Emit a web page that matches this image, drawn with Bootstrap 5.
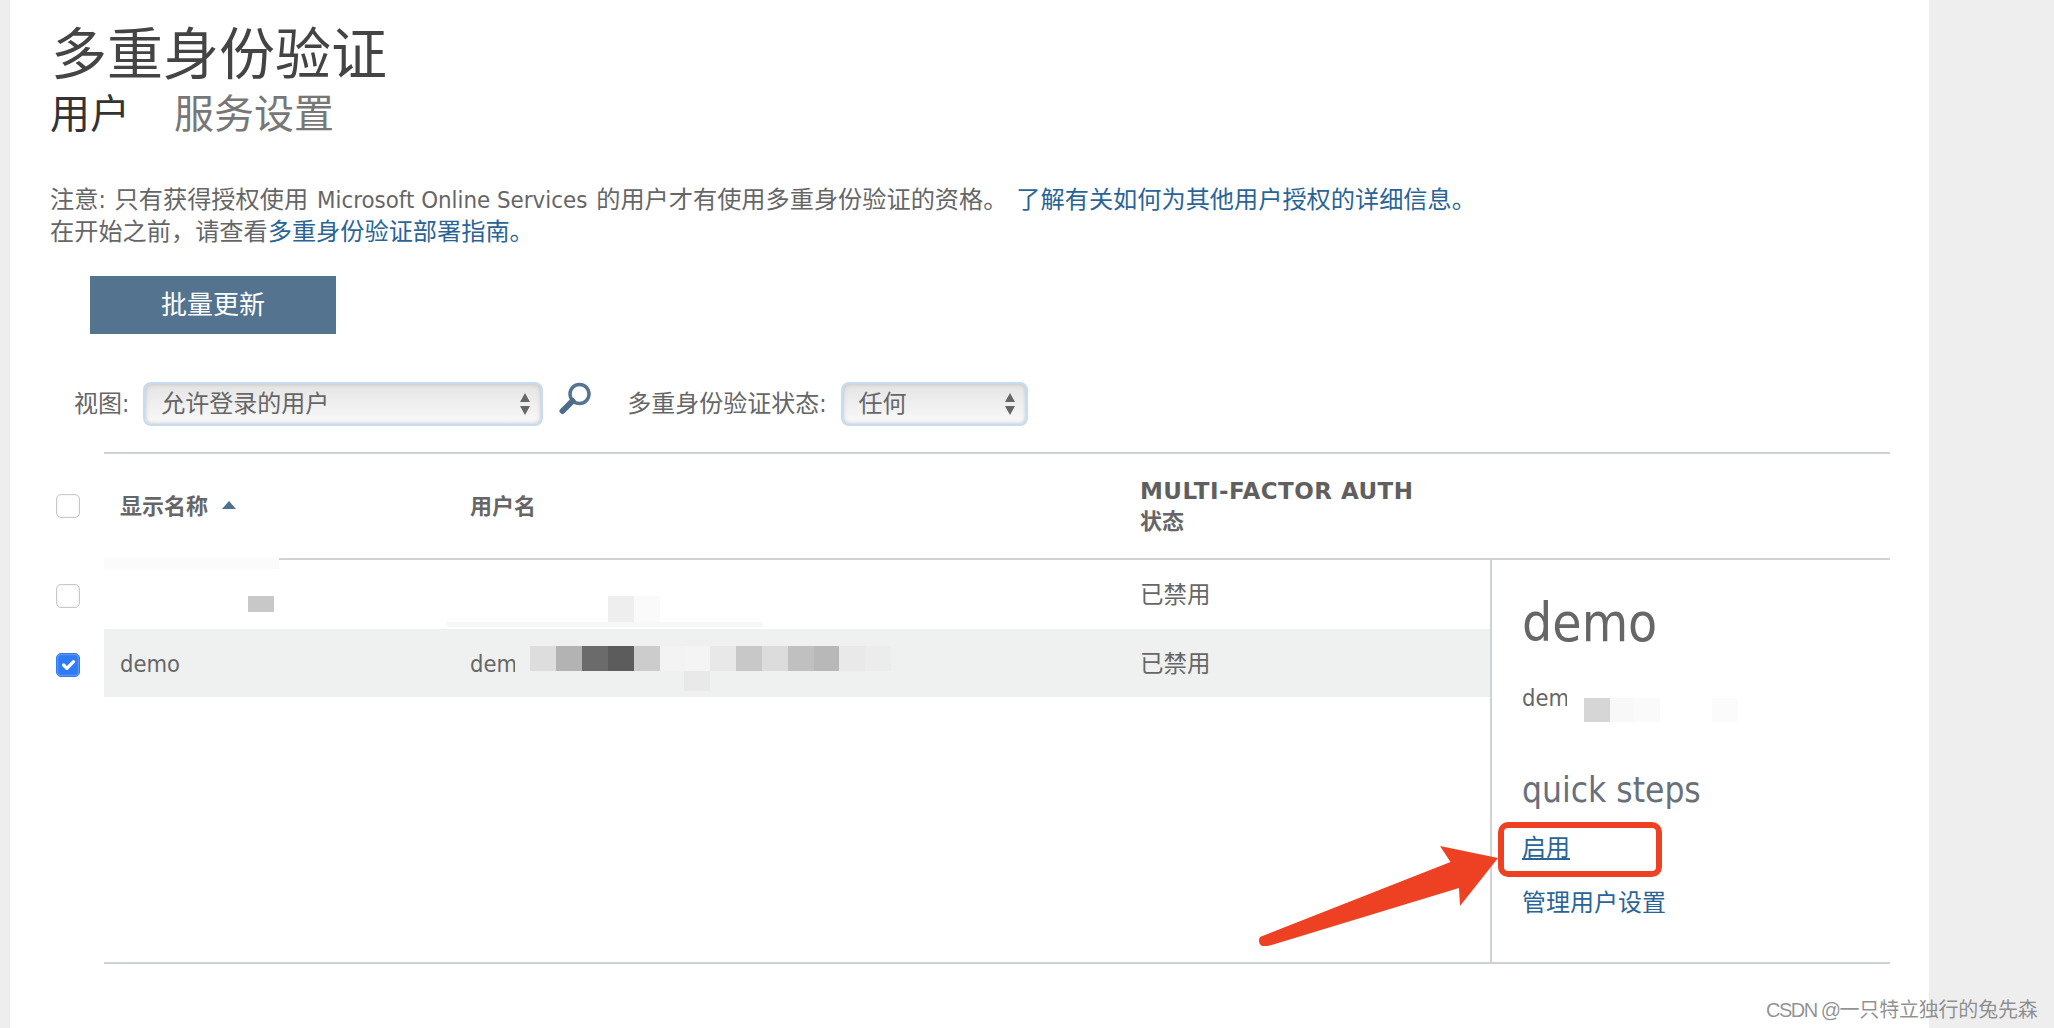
<!DOCTYPE html>
<html lang="zh">
<head>
<meta charset="utf-8">
<title>多重身份验证</title>
<link href="https://cdn.jsdelivr.net/npm/bootstrap@5.3.0/dist/css/bootstrap.min.css" rel="stylesheet">
<style>
html,body{height:100%}
body{background:#eee;font-family:"DejaVu Sans","Noto Sans CJK SC",sans-serif;font-stretch:condensed;color:#666;overflow:hidden}
.sheet{position:relative;margin-left:10px;width:1919px;height:1028px;background:#fff;padding:0 0 0 40px}
.pg-title{font-size:56px;line-height:60px;color:#444;font-weight:400;margin:0;padding:25px 0 0 1px}
.tabs-row{gap:44px;margin-top:6px;font-size:40px;line-height:46px}
.tabs-row a{color:#777;text-decoration:none}
.tabs-row a.on{color:#333}
.notice{font-size:24.200px;line-height:32px;margin:47px 0 0;word-spacing:2px}
.notice span.en{font-size:23.800px;word-spacing:0}
.blue,.blue:hover{color:#2a6496;text-decoration:none}
.bulk{display:block;width:246px;height:58px;margin:28px 0 0 40px;border:0;border-radius:0;background:#53738e;color:#fff;font-size:26px;padding:0}
.filter{margin:40px 0 0 24px;height:60px;font-size:24px}
.filter label{white-space:nowrap}
.pick{height:44px;font-size:24px;color:#666;padding:0 0 0 16px;border:2px solid #c6dcf0;border-radius:8px;line-height:38px;
 background:url("data:image/svg+xml,%3Csvg xmlns='http://www.w3.org/2000/svg' width='12' height='24'%3E%3Cpath d='M6 1l5 9H1zM6 23l5-9H1z' fill='%23666'/%3E%3C/svg%3E") no-repeat right 10px center,linear-gradient(#e4e4e4,#fafafa);box-shadow:inset 0 0 4px #bbb}
.pick.v1{width:400px;margin-left:14px}
.pick.v2{width:187px;margin-left:14px}
.lens{margin:-12px 0 0 16px;width:33px;height:33px;flex:none}
.lbl2{margin-left:35px}
.grid-wrap{position:relative;margin:18px 0 0 54px;width:1786px;border-top:2px solid #ced2d5;border-bottom:2px solid #ced2d5}
.hdr{height:106px;border-bottom:2px solid #ced2d5;font-weight:700;font-size:22px}
.c1{width:366px;padding-left:16px;flex:none}
.c2{width:670px;flex:none}
.c3{flex:none}
.sort-up{display:inline-block;border:7px solid transparent;border-top:0;border-bottom:8px solid #4b7390;margin-left:14px;vertical-align:5px}
.mfa{font-size:23px;line-height:32px;letter-spacing:.02em;color:#5f5f5f;font-stretch:normal}
.sub{font-size:22px;line-height:30px}
.lower{height:402px}
.rows{width:1386px;flex:none}
.urow{height:69px;font-size:23.500px;padding-top:2px}
.urow.sel{height:68px;background:#eff1f1;padding-top:3px}
.side{border-left:2px solid #ced2d5;padding:33px 0 0 30px;flex:1 1 auto}
.side h2{font-size:53px;line-height:60px;font-weight:400;color:#666;margin:0}
.side .mail{font-size:23.500px;line-height:30px;margin:30px 0 0}
.side h3{font-size:35px;line-height:48px;font-weight:400;color:#68707a;margin:53px 0 0}
.side a{display:block;font-size:24px;line-height:32px}
.side a.go{margin-top:18px;text-decoration:underline}
.side a.mg{margin-top:23px}
.form-check-input.cb{position:absolute;left:-48px;width:24px;height:24px;margin:0;border-radius:5px;border:1px solid #c9c9c9;box-shadow:inset 0 0 2px #ddd}
.form-check-input.cb:checked{background-color:#2f7bf6;border-color:#2f7bf6}
.blk{position:absolute}
.redbox{position:absolute;left:1488px;top:822px;width:164px;height:55px;border:6px solid #ee4023;border-radius:10px}
.arrow{position:absolute;left:0;top:0;width:1919px;height:1028px;pointer-events:none}
.mark-wm{position:absolute;left:1756px;top:997px;font-size:20px;line-height:26px;color:rgba(110,110,110,.75);white-space:nowrap;letter-spacing:-.2px;font-family:"Liberation Sans","Noto Sans CJK SC",sans-serif}
.mark-wm span{letter-spacing:-1.500px}
</style>
</head>
<body>
<div class="sheet">
  <h1 class="pg-title">多重身份验证</h1>
  <div class="d-flex tabs-row"><a class="on" href="#">用户</a><a href="#">服务设置</a></div>
  <p class="notice">注意: 只有获得授权使用 <span class="en">Microsoft Online Services</span> 的用户才有使用多重身份验证的资格。 <a class="blue" href="#">了解有关如何为其他用户授权的详细信息。</a><br>在开始之前，请查看<a class="blue" href="#">多重身份验证部署指南。</a></p>
  <button class="btn bulk" type="button">批量更新</button>
  <div class="d-flex align-items-center filter">
    <label for="v1">视图:</label>
    <select id="v1" class="form-select pick v1"><option>允许登录的用户</option></select>
    <svg class="lens" viewBox="0 0 33 33"><circle cx="20.500" cy="12" r="9.500" fill="#fff" stroke="#54748f" stroke-width="3.500"/><path d="M13.500 19L3.500 29" stroke="#4c6d88" stroke-width="6" stroke-linecap="round"/></svg>
    <label class="lbl2" for="v2">多重身份验证状态:</label>
    <select id="v2" class="form-select pick v2"><option>任何</option></select>
  </div>
  <div class="grid-wrap">
    <div class="d-flex align-items-center hdr">
      <input class="form-check-input cb" type="checkbox" aria-label="全选">
      <div class="c1">显示名称<i class="sort-up"></i></div>
      <div class="c2">用户名</div>
      <div class="c3"><div class="mfa">MULTI-FACTOR AUTH</div><div class="sub">状态</div></div>
    </div>
    <div class="d-flex lower">
      <div class="rows">
        <div class="d-flex align-items-center urow">
          <input class="form-check-input cb" type="checkbox" aria-label="选择">
          <div class="c1"></div><div class="c2"></div><div class="c3">已禁用</div>
        </div>
        <div class="d-flex align-items-center urow sel">
          <input class="form-check-input cb" type="checkbox" checked aria-label="选择">
          <div class="c1">demo</div><div class="c2">dem</div><div class="c3">已禁用</div>
        </div>
      </div>
      <div class="side">
        <h2>demo</h2>
        <p class="mail">dem</p>
        <h3>quick steps</h3>
        <a class="blue go" href="#">启用</a>
        <a class="blue mg" href="#">管理用户设置</a>
      </div>
    </div>
  </div>

  <!-- mosaic redaction over the addresses -->
  <div class="blk" style="left:94px;top:557px;width:175px;height:12px;background:#fbfbfb"></div>
  <div class="blk" style="left:238px;top:596px;width:26px;height:16px;background:#c8c8c8"></div>
  <div class="blk" style="left:598px;top:596px;width:26px;height:26px;background:#eee"></div>
  <div class="blk" style="left:624px;top:596px;width:26px;height:26px;background:#fafafa"></div>
  <div class="blk" style="left:437px;top:622px;width:316px;height:5px;background:#f7f7f7"></div>
  <div class="blk" style="left:505px;top:640px;width:15px;height:40px;background:#eff1f1"></div>
  <div class="blk" style="left:520px;top:646px;width:26px;height:25px;background:#ddd"></div>
  <div class="blk" style="left:546px;top:646px;width:26px;height:25px;background:#b3b3b3"></div>
  <div class="blk" style="left:572px;top:646px;width:26px;height:25px;background:#6b6b6b"></div>
  <div class="blk" style="left:598px;top:646px;width:26px;height:25px;background:#5c5c5c"></div>
  <div class="blk" style="left:624px;top:646px;width:26px;height:25px;background:#ccc"></div>
  <div class="blk" style="left:650px;top:646px;width:25px;height:25px;background:#f3f3f3"></div>
  <div class="blk" style="left:675px;top:646px;width:25px;height:25px;background:#f4f4f4"></div>
  <div class="blk" style="left:700px;top:646px;width:26px;height:25px;background:#e8e8e8"></div>
  <div class="blk" style="left:726px;top:646px;width:26px;height:25px;background:#c8c8c8"></div>
  <div class="blk" style="left:752px;top:646px;width:26px;height:25px;background:#dcdcdc"></div>
  <div class="blk" style="left:778px;top:646px;width:26px;height:25px;background:#c0c0c0"></div>
  <div class="blk" style="left:804px;top:646px;width:25px;height:25px;background:#b8b8b8"></div>
  <div class="blk" style="left:829px;top:646px;width:26px;height:25px;background:#e9e9e9"></div>
  <div class="blk" style="left:855px;top:646px;width:26px;height:25px;background:#ececec"></div>
  <div class="blk" style="left:674px;top:671px;width:26px;height:20px;background:#e9e9e9"></div>
  <div class="blk" style="left:1557px;top:685px;width:17px;height:40px;background:#fff"></div>
  <div class="blk" style="left:1574px;top:698px;width:26px;height:24px;background:#d6d6d6"></div>
  <div class="blk" style="left:1600px;top:698px;width:24px;height:24px;background:#f8f8f8"></div>
  <div class="blk" style="left:1624px;top:698px;width:26px;height:24px;background:#fafafa"></div>
  <div class="blk" style="left:1702px;top:698px;width:26px;height:24px;background:#fbfbfb"></div>

  <!-- annotation -->
  <div class="redbox"></div>
  <svg class="arrow" viewBox="0 0 1919 1028"><path d="M1488 858L1430 846L1440.500 862L1250 937Q1247 943 1252 946L1258 946L1449 888L1450 906Z" fill="#ee4023"/></svg>
  <div class="mark-wm"><span>CSDN @</span>一只特立独行的兔先森</div>
</div>
<script src="https://cdn.jsdelivr.net/npm/bootstrap@5.3.0/dist/js/bootstrap.bundle.min.js"></script>
</body>
</html>
